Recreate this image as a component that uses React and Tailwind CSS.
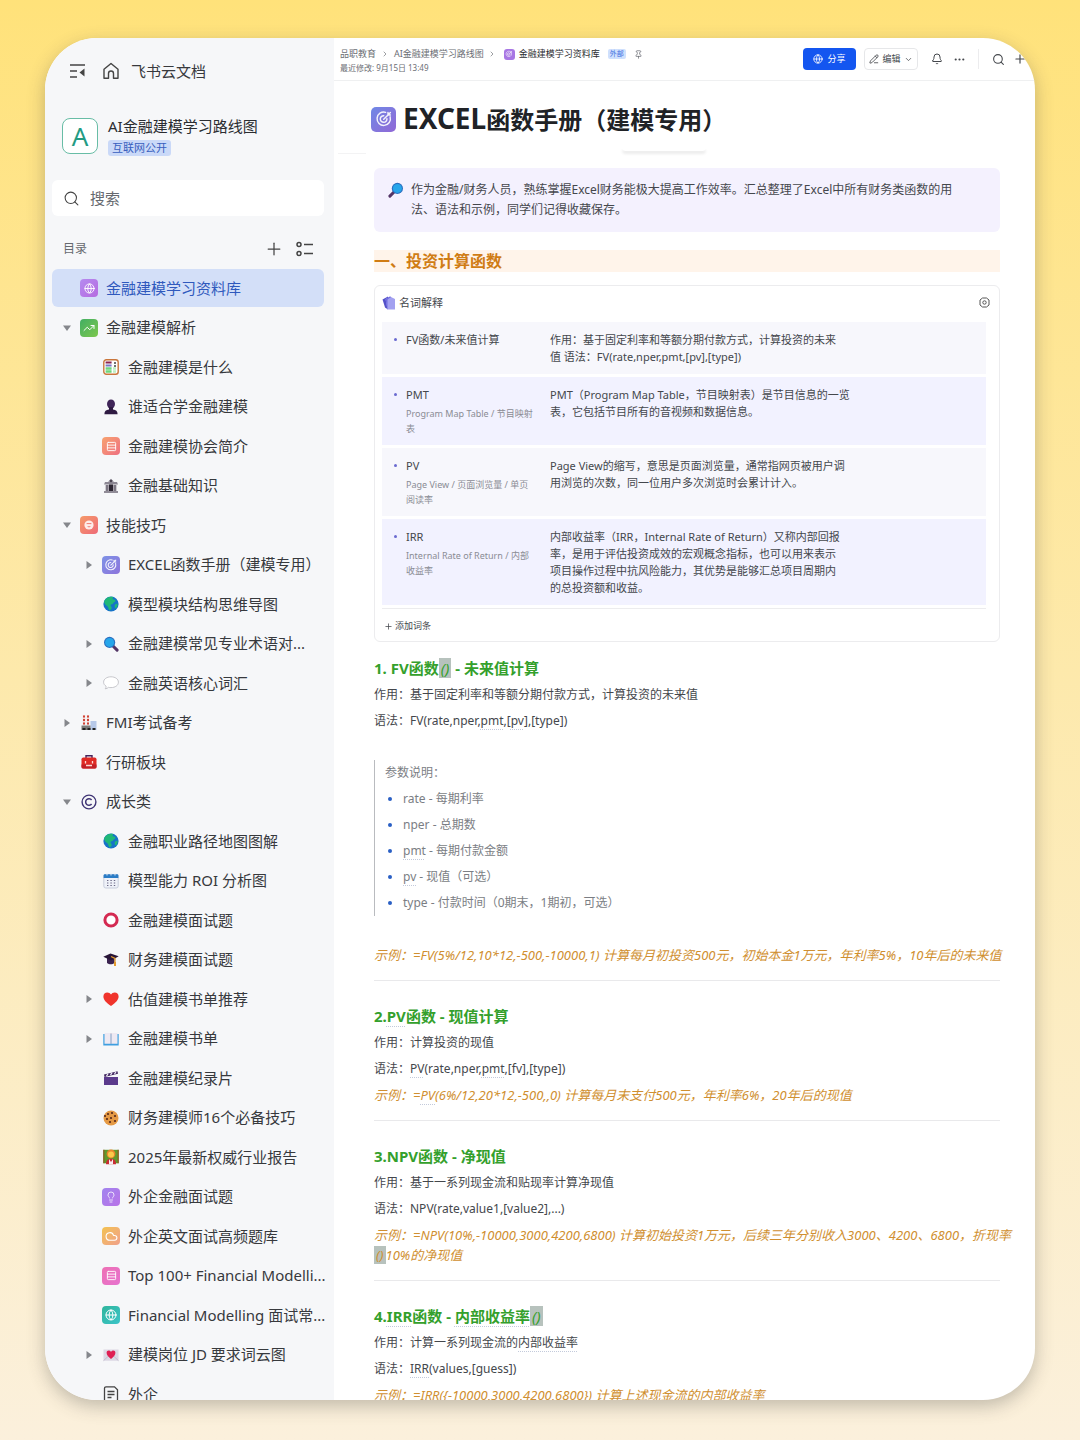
import {
    Bell, ChevronDown, ChevronRight, Ellipsis, Globe, House, Lightbulb,
    PencilLine, Pin, Plus, Search, TrendingUp, Cloud, Rows3,
} from 'lucide-react';

const Target = ({ size = 18 }) => (
    <svg width={size} height={size} viewBox="0 0 18 18" fill="none" stroke="#fff" strokeWidth="1.1" strokeLinecap="round" opacity=".9">
        <path d="M13.600 7.400A5 5 0 1 1 10.200 4" />
        <path d="M11.200 8.800A2.500 2.500 0 1 1 8.800 6.500M8.800 9.200l3.400-3.400M12 4.200v1.800h1.800M12.200 5.800l1.600-1.600" />
    </svg>
);

const Tile = ({ color, children }) => (
    <span className={`flex size-[18px] shrink-0 items-center justify-center rounded-[4px] bg-linear-to-br text-white ${color}`}>{children}</span>
);

const Emoji = ({ children }) => (
    <svg width="16" height="16" viewBox="0 0 16 16" fill="none">{children}</svg>
);

const Lens = ({ flip }) => (
    <svg width="16" height="16" viewBox="0 0 16 16" className={flip ? '-scale-x-100' : ''}>
        <path d="M9.500 9.500l4.600 4.600" stroke="#533566" strokeWidth="3" strokeLinecap="round" />
        <circle cx="6.600" cy="6.400" r="5.600" fill="#2a6fc0" />
        <circle cx="6.600" cy="6.400" r="4.500" fill="#26a6ea" />
    </svg>
);

const Earth = () => (
    <Emoji>
        <circle cx="8" cy="8" r="7.600" fill="#1673c8" />
        <path d="M1.200 5C3 1.600 6.400.2 9.600.8c1.200.6.6 1.600-.4 2 .8 1 3 .2 3.200 1.600.2 1.600-1.800 1.400-2.200 2.800-.6 1.200-2.400.8-2.600 2-.2 1.400 1.800 1.600 1 3.200-.4 1-1.400 1.800-2.400 1.800-1-1.400-.6-3-2-4.200C2.600 9 1 7.400 1.200 5z" fill="#1fb877" />
        <path d="M12 8.500l2.600-1c.2 2-.6 3.800-1.800 5-1.200-.8-1.400-2.600-.8-4z" fill="#1fb877" />
    </Emoji>
);

const icons = {
    web: <Tile color="from-[#b58af0] to-[#b56be0]"><Globe size={11} strokeWidth={2} /></Tile>,
    trend: <Tile color="from-[#3fae62] to-[#7cc84c]"><TrendingUp size={12} strokeWidth={2} /></Tile>,
    list: <Tile color="from-[#f7a26f] to-[#ee6f80]"><Rows3 size={11} strokeWidth={2} /></Tile>,
    skill: (
        <Tile color="from-[#f59a68] to-[#ee6a78]">
            <svg width="18" height="18" viewBox="0 0 18 18">
                <circle cx="9" cy="9" r="4.600" fill="#fff" opacity=".85" />
                <path d="M6.600 7.600h4.800M7.500 10c.7 1.200 2.300 1.200 3 0" stroke="#ef7b72" strokeWidth="1" fill="none" />
            </svg>
        </Tile>
    ),
    target: <Tile color="from-[#7d92e6] to-[#8d74dc]"><Target /></Tile>,
    bulb: <Tile color="from-[#a184ee] to-[#b873e8]"><Lightbulb size={12} strokeWidth={1.500} /></Tile>,
    cloud: <Tile color="from-[#f3c24c] to-[#f0a08a]"><Cloud size={13} strokeWidth={2} /></Tile>,
    pink: <Tile color="from-[#ee70b4] to-[#e672cf]"><Rows3 size={11} strokeWidth={2} /></Tile>,
    teal: <Tile color="from-[#2fb59c] to-[#3cc4c9]"><Globe size={12} strokeWidth={2} /></Tile>,
    earth: <Earth />,
    lens: <Lens />,
    table: (
        <Emoji>
            <rect x=".8" y=".8" width="14.400" height="14.400" rx="2.500" fill="#fff" stroke="#c9763c" strokeWidth="1.400" />
            <path d="M2.600 3.500h6" stroke="#8c2350" strokeWidth="2" />
            <path d="M2.600 6.500h6" stroke="#7a77c4" strokeWidth="2" />
            <path d="M2.600 9.500h6M2.600 12.500h6" stroke="#6fd67c" strokeWidth="2.400" />
            <path d="M10 9.500h3M10 12.500h3" stroke="#bdeec4" strokeWidth="2.400" />
            <path d="M12 3v2M12 6v2" stroke="#444" strokeWidth="1.500" />
        </Emoji>
    ),
    person: (
        <Emoji>
            <ellipse cx="8" cy="5" rx="4" ry="4.600" fill="#3f2558" />
            <path d="M6 8h4v2.500c3 .5 4.600 1.600 4.600 4.700H1.400c0-3.100 1.600-4.200 4.600-4.700z" fill="#2e1a42" />
        </Emoji>
    ),
    bank: (
        <Emoji>
            <path d="M8 .8l3 3H5zM2 4h12l1 2.600H1z" fill="#8c8793" />
            <path d="M2.500 7h11v6h-11z" fill="#a7a1ab" />
            <path d="M4 7v6M12 7v6M1 14h14" stroke="#6f6a77" strokeWidth="1.500" />
            <path d="M6 6.500h4v6.500H6z" fill="#2d2733" />
            <circle cx="8" cy="3" r="1.300" fill="#4c4653" />
        </Emoji>
    ),
    bubble: (
        <Emoji>
            <path d="M8 1.800c4.200 0 7.400 2.200 7.400 5.400S12.200 12.600 8 12.600c-.9 0-1.700 0-2.500-.3-.9.9-1.900 1.500-3.300 1.500.7-.8 1-1.600.9-2.600C1.500 10.200.6 8.800.6 7.200.6 4 3.800 1.800 8 1.800z" fill="#fff" stroke="#b9b9bf" strokeWidth=".8" />
        </Emoji>
    ),
    factory: (
        <Emoji>
            <path d="M3 0v10M7 0v10" stroke="#f2dad8" strokeWidth="2.400" />
            <path d="M3 .5v9M7 .5v9" stroke="#cf4437" strokeWidth="2" strokeDasharray="2 1.500" />
            <path d="M9.500 6h6v9h-6z" fill="#b6c8e8" />
            <path d="M.5 10.500h9V15h-9z" fill="#7c7a78" />
            <path d="M1.500 14h3M6.500 14h3M11.500 14h3" stroke="#222" strokeWidth="2" />
        </Emoji>
    ),
    toolbox: (
        <Emoji>
            <path d="M5 4V1.800h6V4" stroke="#46235c" strokeWidth="1.400" />
            <rect x=".5" y="3.500" width="15" height="11" rx="1.800" fill="#df2a24" />
            <path d="M.5 10.500h15V13a1.500 1.500 0 0 1-1.500 1.500H2A1.500 1.500 0 0 1 .5 13z" fill="#c22026" />
            <path d="M4.500 7v2.500M11.500 7v2.500M5 11.500h6" stroke="#fbd9d5" strokeWidth="1.300" />
        </Emoji>
    ),
    copyright: (
        <Emoji>
            <circle cx="8" cy="8" r="6.900" stroke="#3f3475" strokeWidth="1.400" />
            <path d="M10.600 6a3.300 3.300 0 1 0 0 4" stroke="#3f3475" strokeWidth="1.500" />
        </Emoji>
    ),
    calendar: (
        <Emoji>
            <rect x=".8" y="1.500" width="14.400" height="13.500" rx="2" fill="#eef1f8" stroke="#bcc4d6" strokeWidth=".8" />
            <path d="M.6 2.500c0-.8.6-1.300 1.300-1.300h12.200c.7 0 1.300.5 1.300 1.300V5H.6z" fill="#2a7cc6" />
            <path d="M4 .5v2M8 .5v2M12 .5v2" stroke="#dfe8f4" />
            <path d="M4 7.500h8.500M4 10h8.500M4 12.500h8.500" stroke="#6b6885" strokeWidth="1.200" strokeDasharray="1.400 2" />
        </Emoji>
    ),
    ring: <Emoji><circle cx="8" cy="8" r="6.100" stroke="#d42a52" strokeWidth="3" fill="#fff" /></Emoji>,
    cap: (
        <Emoji>
            <path d="M4 6v5c2 1.800 5.500 1.800 7.500 0V6z" fill="#3a2350" />
            <path d="M.3 4.800L7.500 1.500l8.200 2.800-7.500 4.200z" fill="#281538" />
            <path d="M8 4.500l4 2v6" stroke="#e39a2e" strokeWidth="1.300" />
            <path d="M12 10v4" stroke="#e39a2e" strokeWidth="2" />
        </Emoji>
    ),
    heart: <Emoji><path d="M8 15C3 11.500.4 8.600.4 5.400.4 3 2.100 1.400 4.300 1.400c1.600 0 2.900.8 3.700 2.200.8-1.400 2.100-2.200 3.700-2.200 2.200 0 3.900 1.600 3.900 4C15.600 8.600 13 11.500 8 15z" fill="#f0342c" /></Emoji>,
    book: (
        <Emoji>
            <path d="M.3 3h15.400v11.500H.3z" fill="#3f9fe0" />
            <path d="M1.500 2h6.200v10.800H1.500zM8.300 2h6.200v10.800H8.300z" fill="#eee9f2" />
            <path d="M8 2v11" stroke="#b7b0c2" strokeWidth=".8" />
        </Emoji>
    ),
    film: (
        <Emoji>
            <path d="M1 7h14v8H1z" fill="#5b3a8c" />
            <path d="M1 4.500l13.500-3.200.5 2.500L1.500 7z" fill="#41275f" />
            <path d="M3.500 6.200l1.500-2.600M7.500 5.200L9 2.700M11.500 4.300l1.400-2.600" stroke="#e9e4f2" strokeWidth="1.300" />
        </Emoji>
    ),
    cookie: (
        <Emoji>
            <circle cx="8" cy="8" r="7.500" fill="#e59a45" />
            {[[5, 4], [9, 3], [12, 6], [8, 8], [4, 9], [12, 11], [7, 12], [2, 6]].map(([x, y]) => (
                <circle key={`${x}-${y}`} cx={x} cy={y} r="1.100" fill="#56281c" />
            ))}
        </Emoji>
    ),
    teacher: (
        <Emoji>
            <path d="M.5.8h15v13.500H.5z" fill="#5e9a2c" />
            <path d="M.8.8v13.500M15.200.8v13.500" stroke="#8c5a22" strokeWidth="1.200" />
            <circle cx="8" cy="4.800" r="4.400" fill="#e8862c" />
            <circle cx="8" cy="5.600" r="3" fill="#fbc94a" />
            <path d="M3 15.200c0-4 2-5.500 5-5.500s5 1.500 5 5.500z" fill="#c92c34" />
            <path d="M6 10l2 3 2-3v5.200H6z" fill="#f6eef0" />
        </Emoji>
    ),
    letter: (
        <Emoji>
            <path d="M.5 2.500h15v11.200H.5z" fill="#dcd8e4" />
            <path d="M.5 13.700L6 8.500M15.500 13.700L10 8.500" stroke="#bcb5c8" strokeWidth=".8" />
            <path d="M8 12C5 9.600 3.600 8 3.600 5.800c0-2.800 3.400-3 4.400-.8 1-2.200 4.400-2 4.400.8C12.400 8 11 9.600 8 12z" fill="#df1f53" />
        </Emoji>
    ),
    doc: (
        <Emoji>
            <path d="M3 .8h8.500l3 3v9.400a2 2 0 0 1-2 2H3a1.500 1.500 0 0 1-1.500-1.500V2.300A1.500 1.500 0 0 1 3 .8z" stroke="#444" strokeWidth="1.300" />
            <path d="M4.500 5.500h7M4.500 8.500h7M4.500 11.500h4" stroke="#444" strokeWidth="1.300" />
        </Emoji>
    ),
};

// level, icon, label, arrow
const tree = [
    [0, 'web', '金融建模学习资料库'],
    [0, 'trend', '金融建模解析', 'open'],
    [1, 'table', '金融建模是什么'],
    [1, 'person', '谁适合学金融建模'],
    [1, 'list', '金融建模协会简介'],
    [1, 'bank', '金融基础知识'],
    [0, 'skill', '技能技巧', 'open'],
    [1, 'target', 'EXCEL函数手册（建模专用）', 'closed'],
    [1, 'earth', '模型模块结构思维导图'],
    [1, 'lens', '金融建模常见专业术语对...', 'closed'],
    [1, 'bubble', '金融英语核心词汇', 'closed'],
    [0, 'factory', 'FMI考试备考', 'closed'],
    [0, 'toolbox', '行研板块'],
    [0, 'copyright', '成长类', 'open'],
    [1, 'earth', '金融职业路径地图图解'],
    [1, 'calendar', '模型能力 ROI 分析图'],
    [1, 'ring', '金融建模面试题'],
    [1, 'cap', '财务建模面试题'],
    [1, 'heart', '估值建模书单推荐', 'closed'],
    [1, 'book', '金融建模书单', 'closed'],
    [1, 'film', '金融建模纪录片'],
    [1, 'cookie', '财务建模师16个必备技巧'],
    [1, 'teacher', '2025年最新权威行业报告'],
    [1, 'bulb', '外企金融面试题'],
    [1, 'cloud', '外企英文面试高频题库'],
    [1, 'pink', 'Top 100+ Financial Modelli...'],
    [1, 'teal', 'Financial Modelling 面试常...'],
    [1, 'letter', '建模岗位 JD 要求词云图', 'closed'],
    [1, 'doc', '外企'],
];

const Arrow = ({ state }) => (
    <svg width="8" height="8" viewBox="0 0 8 8" fill="#85878c" className="shrink-0">
        {state === 'open' && <path d="M0 1.500h8L4 7z" />}
        {state === 'closed' && <path d="M1.500 0v8L7 4z" />}
    </svg>
);

const TreeItem = ({ level, icon, label, arrow, active }) => (
    <li className="flex items-center odd:h-[40px] even:h-[39px]">
        <a
            href="#"
            className={`flex h-[38px] w-full items-center whitespace-nowrap rounded-md text-[15px] ${level ? 'pl-[33px]' : 'pl-[11px]'} ${active ? 'bg-[#d3dff8] text-[#2f59bd]' : 'text-[#37393d]'}`}
        >
            <Arrow state={arrow} />
            <span className="ml-2 flex w-5 shrink-0 justify-center">{icons[icon]}</span>
            <span className="ml-[7px]">{label}</span>
        </a>
    </li>
);

const Sidebar = () => (
    <aside className="w-[289px] shrink-0 bg-[#f6f7f9] pl-[7px] pr-[10px] pt-[21px]">
        <div className="flex h-6 items-center pl-[17px] text-[15px] text-[#37393d]">
            <button type="button" aria-label="收起目录">
                <svg width="17" height="16" viewBox="0 0 17 16" fill="none" stroke="#444" strokeWidth="1.400">
                    <path d="M1 2h15M1 8h7M1 14h7" />
                    <path d="M15.500 5.500v8L10.500 9.500z" fill="#444" stroke="none" />
                </svg>
            </button>
            <a href="#" className="ml-4 flex items-center gap-[11px]">
                <svg width="18" height="18" viewBox="0 0 18 18" fill="none" stroke="#444" strokeWidth="1.400" strokeLinejoin="round">
                    <path d="M2 7.200L9 1.500l7 5.700v9h-4.500v-4.700a2.500 2.500 0 0 0-5 0v4.700H2z" />
                </svg>
                飞书云文档
            </a>
        </div>

        <div className="mt-8 flex h-[42px] items-center pl-[10px]">
            <span className="flex size-9 items-center justify-center rounded-lg border border-[#68bda6] bg-white text-[26px] leading-none text-[#239b83]">A</span>
            <div className="ml-[10px]">
                <p className="text-[15px] leading-5 text-[#2b2d31]">AI金融建模学习路线图</p>
                <span className="mt-1 block w-fit rounded-[3px] bg-[#cad9f8] px-1 text-[11px] leading-4 text-[#385fbe]">互联网公开</span>
            </div>
        </div>

        <label className="mt-[23px] flex h-[36px] items-center gap-[10px] rounded-md bg-white pl-[11px]">
            <Search size={17} strokeWidth={1.500} className="text-[#444]" />
            <input type="text" placeholder="搜索" aria-label="搜索" className="w-40 text-[15px] outline-none placeholder:text-[#66696f]" />
        </label>

        <div className="mt-[22px] flex h-[22px] items-center px-[11px]">
            <span className="flex-1 text-[12px] text-[#66696f]">目录</span>
            <button type="button" aria-label="新建"><Plus size={20} strokeWidth={1.500} className="text-[#444]" /></button>
            <button type="button" aria-label="目录设置" className="ml-3">
                <svg width="17" height="16" viewBox="0 0 17 16" fill="none" stroke="#444" strokeWidth="1.500">
                    <circle cx="3" cy="3.500" r="2" />
                    <circle cx="3" cy="12.500" r="2" />
                    <path d="M8 3.500h9M8 12.500h9" />
                </svg>
            </button>
        </div>

        <ul className="mt-2">
            {tree.map(([level, icon, label, arrow], i) => (
                <TreeItem key={label} level={level} icon={icon} label={label} arrow={arrow} active={i === 0} />
            ))}
        </ul>
    </aside>
);

const TopBar = () => (
    <header className="flex h-[43px] items-center border-b border-[#eff0f1] pl-[6px] pr-2 text-[#44474c]">
        <div className="flex-1 pt-[2px] text-[9px] text-[#6b6e74]">
            <nav className="flex items-center whitespace-nowrap leading-4">
                <a href="#">品职教育</a>
                <ChevronRight size={8} className="mx-[5px]" />
                <a href="#">AI金融建模学习路线图</a>
                <ChevronRight size={8} className="mx-1" />
                <span className="mx-1 flex size-[11px] items-center justify-center rounded-[3px] bg-[#a877e4] text-white"><Target size={10} /></span>
                <a href="#" className="text-[#2b2d31]">金融建模学习资料库</a>
                <span className="mx-2 rounded-[2px] bg-[#cfe0fd] px-[2px] text-[7px] leading-[10px] text-[#3a6be0]">外部</span>
                <Pin size={9} />
            </nav>
            <p className="text-[8px] leading-3">最近修改: 9月15日 13:49</p>
        </div>
        <button type="button" className="flex h-[22px] w-[53px] items-center justify-center gap-1 rounded-[4px] bg-[#1456f0] text-[9px] text-white">
            <Globe size={10} />
            分享
        </button>
        <button type="button" className="ml-2 flex h-[22px] w-[54px] items-center justify-center gap-[3px] rounded-[4px] border border-[#e6e7e9] text-[9px]">
            <PencilLine size={10} />
            编辑
            <ChevronDown size={9} />
        </button>
        <button type="button" aria-label="通知" className="ml-[13px]"><Bell size={12} /></button>
        <button type="button" aria-label="更多" className="ml-[10px]"><Ellipsis size={13} /></button>
        <span className="ml-3 h-5 w-px bg-[#ececee]"></span>
        <button type="button" aria-label="搜索文档" className="ml-[13px]"><Search size={13} /></button>
        <button type="button" aria-label="新建文档" className="ml-2"><Plus size={14} /></button>
    </header>
);

const terms = [
    { name: 'FV函数/未来值计算', desc: ['作用：基于固定利率和等额分期付款方式，计算投资的未来', '值 语法：FV(rate,nper,pmt,[pv],[type])'] },
    { name: 'PMT', alias: ['Program Map Table / 节目映射', '表'], desc: ['PMT（Program Map Table，节目映射表）是节目信息的一览', '表，它包括节目所有的音视频和数据信息。'] },
    { name: 'PV', alias: ['Page View / 页面浏览量 / 单页', '阅读率'], desc: ['Page View的缩写，意思是页面浏览量，通常指网页被用户调', '用浏览的次数，同一位用户多次浏览时会累计计入。'] },
    { name: 'IRR', alias: ['Internal Rate of Return / 内部', '收益率'], desc: ['内部收益率（IRR，Internal Rate of Return）又称内部回报', '率，是用于评估投资成效的宏观概念指标，也可以用来表示', '项目操作过程中抗风险能力，其优势是能够汇总项目周期内', '的总投资额和收益。'] },
];

const Lines = ({ rows }) => rows.map((row) => <span key={row} className="block whitespace-nowrap">{row}</span>);

const Glossary = () => (
    <section className="mt-[13px] rounded-md border border-[#ececee] pl-[7px] pr-[13px] text-[11px] text-[#44474c]">
        <div className="flex h-[33px] items-center">
            <svg width="14" height="14" viewBox="0 0 14 14">
                <path d="M.5 3.500L6 .5v13L3 11.500z" fill="#5350c8" />
                <path d="M3.500 3L8 .5l5 2.500v10.500H5.500z" fill="#a3a1f0" />
                <path d="M3.500 3L8 .5l1 .5-3.500 2.500v10z" fill="#6f6ce0" />
            </svg>
            <span className="ml-[3px] flex-1">名词解释</span>
            <button type="button" aria-label="设置" className="-mr-1">
                <svg width="11" height="11" viewBox="0 0 11 11" fill="none" stroke="#555">
                    <path d="M3.500 1h4L10 3v5L7.500 10h-4L1 8V3z" strokeLinejoin="round" />
                    <circle cx="5.500" cy="5.500" r="1.700" />
                </svg>
            </button>
        </div>
        <table className="w-full table-fixed border-separate border-spacing-x-0 border-spacing-y-[3px] border-b border-[#ececee] text-left">
            <tbody>
                {terms.map(({ name, alias, desc }) => (
                    <tr key={name} className="align-top odd:bg-[#f7f7fc] even:bg-[#f2f2ff]">
                        <th scope="row" className="w-[168px] py-[9px] pl-3 font-normal">
                            <div className="flex">
                                <span className="mt-[7px] mr-[9px] size-[3px] rounded-full bg-[#6a6ad0]"></span>
                                <div className="leading-[17px]">
                                    {name}
                                    {alias && <div className="mt-[3px] text-[9px] leading-[15px] text-[#8a8c94]"><Lines rows={alias} /></div>}
                                </div>
                            </div>
                        </th>
                        <td className="py-[9px] leading-[17px]"><Lines rows={desc} /></td>
                    </tr>
                ))}
            </tbody>
        </table>
        <button type="button" className="flex h-8 items-center gap-[2px] pl-[2px] pt-[2px] text-[9px]">
            <Plus size={9} />
            添加词条
        </button>
    </section>
);

const Spell = ({ children }) => (
    <span className="underline decoration-[#c3cadb] decoration-dotted decoration-1 underline-offset-4">{children}</span>
);

const Mark = () => <span className="bg-[#b7c2bd] px-[2px] font-normal italic">()</span>;

const Heading = ({ children }) => <h3 className="text-[15px] font-bold leading-7 text-[#34a02c]">{children}</h3>;

const Example = ({ children }) => <p className="whitespace-nowrap py-[3px] text-[13px] italic leading-5 text-[#d08f30]">{children}</p>;

const Divider = () => <hr className="mt-3 mb-[21px] border-[#e9e9eb]" />;

const params = [
    ['rate', '每期利率'],
    ['nper', '总期数'],
    ['pmt', '每期付款金额', true],
    ['pv', '现值（可选）', true],
    ['type', '付款时间（0期末，1期初，可选）'],
];

const Article = () => (
    <article className="pl-10 pr-[35px] text-[12px] leading-[26px] text-[#44474c]">
        <div className="flex h-[66px] items-center pt-[10px]">
            <span className="-ml-[3px] flex size-[25px] items-center justify-center rounded-[5px] bg-linear-to-br from-[#6e88e6] to-[#9068d6]"><Target size={24} /></span>
            <h1 className="ml-[7px] text-[24px] font-bold text-[#202226]">
                <span className="text-[28px]">EXCEL</span>函数手册（建模专用）
            </h1>
        </div>
        <div className="ml-[248px] h-1 w-[84px] rounded-b-md bg-white shadow-[0_3px_3px_rgba(0,0,0,0.08)]"></div>
        <div className="-ml-9 mt-[2px] h-px w-7 bg-[#f3f3f4]"></div>

        <div className="mt-[14px] flex rounded-md bg-[#f4f1fe] px-[14px] py-3 leading-5">
            <span className="mt-[2px] mr-[7px]"><Lens flip /></span>
            <p>
                作为金融/财务人员，熟练掌握Excel财务能极大提高工作效率。汇总整理了Excel中所有财务类函数的用
                <br />
                法、语法和示例，同学们记得收藏保存。
            </p>
        </div>

        <h2 className="mt-[18px] bg-[#fff4ea] text-[16px] font-bold leading-[22px] text-[#d07c14]">一、投资计算函数</h2>

        <Glossary />

        <div className="mt-3">
            <Heading>1. FV函数<Mark /> - 未来值计算</Heading>
            <p>作用：基于固定利率和等额分期付款方式，计算投资的未来值</p>
            <p>语法：FV(rate,nper,<Spell>pmt</Spell>,[<Spell>pv</Spell>],[type])</p>
            <blockquote className="my-[26px] border-l border-[#b9bbbf] pl-[10px] text-[#7b7e84]">
                <p>参数说明：</p>
                <ul>
                    {params.map(([name, text, marked]) => (
                        <li key={name} className="flex items-center">
                            <span className="ml-[3px] mr-[11px] size-1 rounded-full bg-[#2a5fc4]"></span>
                            <span>{marked ? <Spell>{name}</Spell> : name} - {text}</span>
                        </li>
                    ))}
                </ul>
            </blockquote>
            <Example>示例：=FV(5%/12,10*12,-500,-10000,1) 计算每月初投资500元，初始本金1万元，年利率5%，10年后的未来值</Example>
        </div>
        <Divider />

        <div>
            <Heading>2.<Spell>PV</Spell>函数 - 现值计算</Heading>
            <p>作用：计算投资的现值</p>
            <p>语法：<Spell>PV</Spell>(rate,nper,<Spell>pmt</Spell>,[fv],[type])</p>
            <Example>示例：=<Spell>PV</Spell>(6%/12,20*12,-500,,0) 计算每月末支付500元，年利率6%，20年后的现值</Example>
        </div>
        <Divider />

        <div>
            <Heading>3.NPV函数 - 净现值</Heading>
            <p>作用：基于一系列现金流和贴现率计算净现值</p>
            <p>语法：NPV(rate,value1,[value2],...)</p>
            <Example>
                示例：=NPV(10%,-10000,3000,4200,6800) 计算初始投资1万元，后续三年分别收入3000、4200、6800，折现率
                <br />
                <Mark />10%的净现值
            </Example>
        </div>
        <Divider />

        <div>
            <Heading>4.<Spell>IRR</Spell>函数 - <Spell>内部收益率</Spell><Mark /></Heading>
            <p>作用：计算一系列现金流的<Spell>内部收益率</Spell></p>
            <p>语法：<Spell>IRR</Spell>(values,[guess])</p>
            <Example>示例：=IRR({'{'}-10000,3000,4200,6800{'}'}) 计算上述现金流的内部收益率</Example>
        </div>
    </article>
);

const App = () => (
    <div className="h-screen bg-linear-to-b from-[#ffe27a] to-[#fbf0dc] px-[45px] pt-[38px] pb-10 font-['Noto_Sans','Noto_Sans_CJK_SC',sans-serif]">
        <div className="flex h-full overflow-hidden rounded-[52px] bg-white shadow-[0_6px_18px_rgba(60,60,60,0.3)]">
            <Sidebar />
            <main className="min-w-0 flex-1">
                <TopBar />
                <Article />
            </main>
        </div>
    </div>
);

export default App;
